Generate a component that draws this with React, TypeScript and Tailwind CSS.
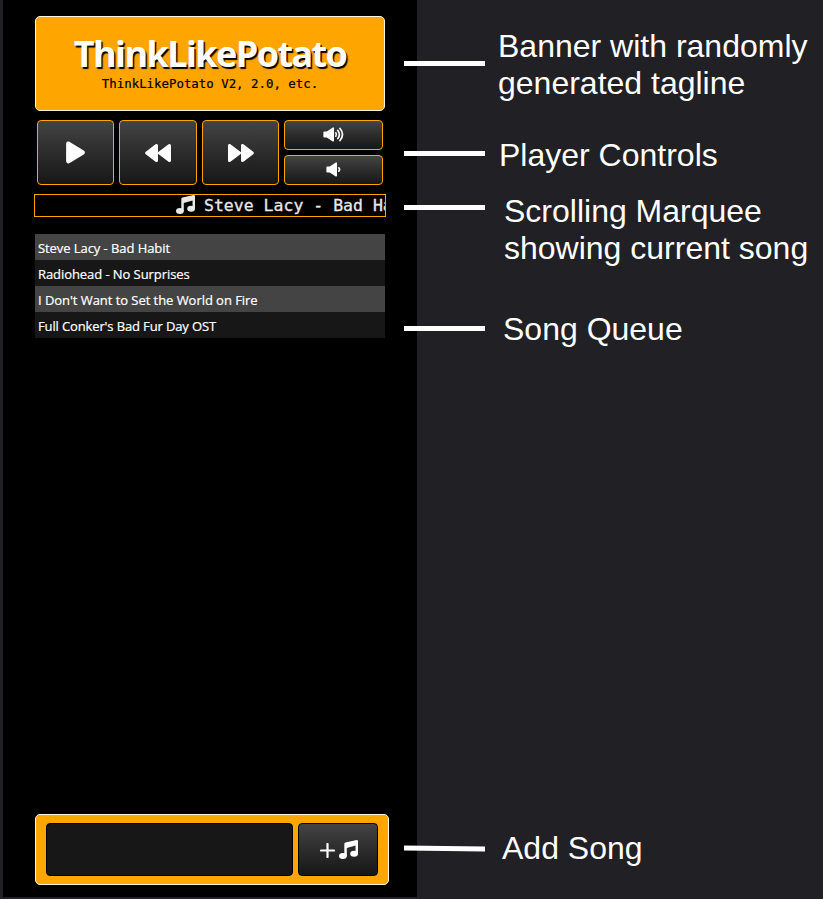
import type { ReactNode } from 'react';
import { FaPlay } from 'react-icons/fa6';

const songs = [
  { title: 'Steve Lacy - Bad Habit', style: 'bg-[#444444] tracking-[-0.07px]' },
  { title: 'Radiohead - No Surprises', style: 'bg-[#171717] tracking-[-0.07px]' },
  { title: "I Don't Want to Set the World on Fire", style: 'bg-[#444444] tracking-[-0.05px]' },
  { title: "Full Conker's Bad Fur Day OST", style: 'bg-[#171717] tracking-[-0.13px]' },
];

function SkipIcon({ className = '' }: { className?: string }) {
  return (
    <svg width="26" height="18" viewBox="0 0 26 18" fill="currentColor" stroke="currentColor" strokeWidth="3" strokeLinejoin="round" className={className}>
      <path d="M1.5 1.5v15L11.5 9zM14.5 1.5v15L24.3 9z" />
    </svg>
  );
}

function NotesIcon({ size, className = '' }: { size: number; className?: string }) {
  return (
    <svg width={size} height={size} viewBox="0 0 20 20" fill="currentColor" className={className}>
      <path d="M5.6 4.2Q5.6 3 6.8 2.6L18.6.1Q20 0 20 1.3V15H17.4V5.9L8.2 8.5V17H5.6z" />
      <ellipse cx="4.1" cy="16.8" rx="4.1" ry="3.1" />
      <ellipse cx="15.9" cy="14.4" rx="4.1" ry="3.1" />
    </svg>
  );
}

function SpeakerIcon({ loud = false }: { loud?: boolean }) {
  return (
    <svg width={loud ? 21 : 15} height="15" viewBox={loud ? '0 0 21 15' : '0 0 15 15'} fill="none" stroke="currentColor" strokeWidth="1.7" strokeLinecap="round">
      <path d="M1.2 5.2h3L10.2 1.2v12.6L4.2 9.8h-3z" fill="currentColor" strokeWidth="1.6" strokeLinejoin="round" />
      <path d="M12.8 5.8q1.4 1.7 0 3.4" />
      {loud && <path d="M14.8 3.5q3.2 4 0 8M17 1.5q5 6 0 12" />}
    </svg>
  );
}

function Control({ className, label, children }: { className: string; label: string; children: ReactNode }) {
  return (
    <button
      aria-label={label}
      className={`flex items-center justify-center rounded border border-[#ffa500] bg-linear-to-b from-[#444444] to-[#171717] text-white ${className}`}
    >
      {children}
    </button>
  );
}

function Note({ className, textClass, lineClass = '', children }: { className: string; textClass: string; lineClass?: string; children: ReactNode }) {
  return (
    <div className={`flex items-start ${className}`}>
      <span className={`h-[5px] w-[81px] shrink-0 bg-white ${lineClass}`} />
      <p className={`whitespace-nowrap font-['Liberation_Sans',Arial,sans-serif] text-[32px] leading-[37px] text-white ${textClass}`}>
        {children}
      </p>
    </div>
  );
}

export default function App() {
  return (
    <div className="flex h-[899px] w-[823px] overflow-hidden bg-[#212024] pl-[3px]">
      <main className="flex h-[897px] w-[414px] shrink-0 flex-col bg-black pt-4 pl-8 font-['Open_Sans','Noto_Sans',sans-serif]">
        <header className="flex h-[95px] w-[350px] flex-col items-center rounded-[5px] border border-[#fff5dc] bg-[#ffa500] pt-[17px]">
          <h1 className="h-[40px] whitespace-nowrap text-[36px] leading-[40px] font-bold tracking-[-1.6px] text-white [text-shadow:1.5px_1.5px_1px_#000]">
            ThinkLikePotato
          </h1>
          <p className="mt-[2px] whitespace-pre font-['DejaVu_Sans_Mono',monospace] text-[12.4px] leading-4 text-black [-webkit-text-stroke:0.2px_black]">
            ThinkLikePotato V2, 2.0, etc.
          </p>
        </header>

        <section className="mt-[9px] ml-[2px] flex h-[65px] gap-[5px]">
          <Control label="Play" className="h-[65px] w-[77px]"><FaPlay size={25} /></Control>
          <Control label="Previous" className="h-[65px] w-[78px]"><SkipIcon className="rotate-180" /></Control>
          <Control label="Next" className="h-[65px] w-[77px]"><SkipIcon /></Control>
          <div className="flex flex-col gap-[5px]">
            <Control label="Volume up" className="h-[30px] w-[99px] pb-[2px]"><SpeakerIcon loud /></Control>
            <Control label="Volume down" className="h-[30px] w-[99px] pb-[2px]"><SpeakerIcon /></Control>
          </div>
        </section>

        <section className="mt-[9px] -ml-px flex h-[23px] w-[352px] items-center overflow-hidden border border-[#ffa500] pl-[141px] text-[#e8e8e8]">
          <NotesIcon size={19} className="mb-[2px] shrink-0" />
          <span className="ml-[9px] whitespace-nowrap font-['DejaVu_Sans_Mono',monospace] text-[16.5px] leading-5 [-webkit-text-stroke:0.3px_#e8e8e8]">
            Steve Lacy - Bad Habit
          </span>
        </section>

        <ul className="mt-[17px] w-[350px]">
          {songs.map(({ title, style }) => (
            <li key={title} className={`h-[26px] whitespace-nowrap pt-px pl-[3px] text-[13px] leading-[26px] text-white [-webkit-text-stroke:0.2px_white] ${style}`}>
              {title}
            </li>
          ))}
        </ul>

        <form className="mt-auto mb-3 flex h-[71px] w-[354px] gap-[5px] rounded-[5px] border border-[#fff5dc] bg-[#ffa500] px-[10px] pt-2">
          <input aria-label="Song" className="h-[53px] w-[247px] rounded border border-black bg-[#171717] px-2 text-white outline-none" />
          <button type="button" aria-label="Add song" className="flex h-[53px] w-[80px] items-center justify-center gap-1 rounded border border-black bg-linear-to-b from-[#444444] to-[#171717] pl-px text-white">
            <svg width="15" height="15" viewBox="0 0 15 15" stroke="currentColor" strokeWidth="2.2" strokeLinecap="round" className="mt-[2px]"><path d="M7.5 1v13M1 7.5h13" /></svg>
            <NotesIcon size={19} />
          </button>
        </form>
      </main>

      <aside className="relative -ml-[13px] shrink-0">
        <Note className="h-[90px] pt-[61px]" textClass="-mt-[33px] ml-[13px]">Banner with randomly<br />generated tagline</Note>
        <Note className="h-[54px] pt-[61px]" textClass="-mt-[14px] ml-[14px]">Player Controls</Note>
        <Note className="h-[121px] pt-[54px]" textClass="-mt-[12px] ml-[19px]">Scrolling Marquee<br />showing current song</Note>
        <Note className="h-[520px] pt-[54px]" textClass="-mt-[15px] ml-[18px]">Song Queue</Note>
        <Note className="h-[114px] pt-[54px]" lineClass="rotate-[0.7deg]" textClass="-mt-[16px] ml-[17px]">Add Song</Note>
      </aside>
    </div>
  );
}
